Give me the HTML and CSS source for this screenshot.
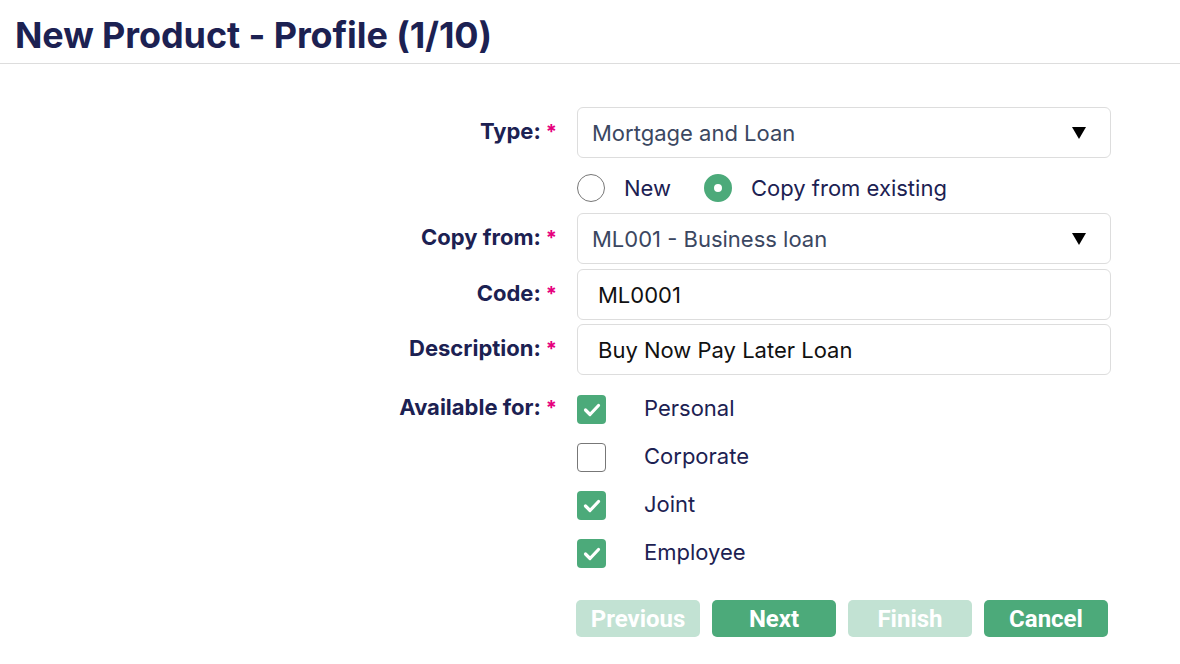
FILE: index.html
```html
<!DOCTYPE html>
<html lang="en">
<head>
    <meta charset="UTF-8">
    <meta name="viewport" content="width=device-width, initial-scale=1.0">
    <title>New Product - Profile</title>
    <link rel="stylesheet" href="styles.css">
</head>
<body>
    <h1 class="page-title">New Product - Profile (1/10)</h1>

    <form class="profile-form">
        <div class="row">
            <label class="label">Type:<span class="req">*</span></label>
            <div class="field select">
                <span class="value">Mortgage and Loan</span>
                <svg class="arrow" width="14" height="12" viewBox="0 0 14 12"><polygon points="0,0 14,0 7,12" fill="#000"/></svg>
            </div>
        </div>

        <div class="row radio-row">
            <div class="label"></div>
            <div class="radios">
                <span class="radio"></span><span class="radio-text">New</span>
                <span class="radio checked"></span><span class="radio-text">Copy from existing</span>
            </div>
        </div>

        <div class="row">
            <label class="label">Copy from:<span class="req">*</span></label>
            <div class="field select">
                <span class="value">ML001 - Business loan</span>
                <svg class="arrow" width="14" height="12" viewBox="0 0 14 12"><polygon points="0,0 14,0 7,12" fill="#000"/></svg>
            </div>
        </div>

        <div class="row row-code">
            <label class="label">Code:<span class="req">*</span></label>
            <div class="field text">ML0001</div>
        </div>

        <div class="row row-desc">
            <label class="label">Description:<span class="req">*</span></label>
            <div class="field text">Buy Now Pay Later Loan</div>
        </div>

        <div class="row row-avail">
            <label class="label">Available for:<span class="req">*</span></label>
            <div class="checks">
                <div class="check-item">
                    <span class="box checked"><svg width="18" height="14" viewBox="0 0 18 14"><polyline points="2.5,7 7,11.5 15.5,2.5" fill="none" stroke="#fff" stroke-width="3.2" stroke-linecap="round" stroke-linejoin="round"/></svg></span>
                    <span class="check-text">Personal</span>
                </div>
                <div class="check-item">
                    <span class="box"></span>
                    <span class="check-text">Corporate</span>
                </div>
                <div class="check-item">
                    <span class="box checked"><svg width="18" height="14" viewBox="0 0 18 14"><polyline points="2.5,7 7,11.5 15.5,2.5" fill="none" stroke="#fff" stroke-width="3.2" stroke-linecap="round" stroke-linejoin="round"/></svg></span>
                    <span class="check-text">Joint</span>
                </div>
                <div class="check-item">
                    <span class="box checked"><svg width="18" height="14" viewBox="0 0 18 14"><polyline points="2.5,7 7,11.5 15.5,2.5" fill="none" stroke="#fff" stroke-width="3.2" stroke-linecap="round" stroke-linejoin="round"/></svg></span>
                    <span class="check-text">Employee</span>
                </div>
            </div>
        </div>

        <div class="row row-buttons">
            <div class="label"></div>
            <div class="buttons">
                <button type="button" class="btn disabled">Previous</button>
                <button type="button" class="btn">Next</button>
                <button type="button" class="btn disabled">Finish</button>
                <button type="button" class="btn">Cancel</button>
            </div>
        </div>
    </form>
</body>
</html>
```

FILE: styles.css
```css
body {
    margin: 0;
    font-family: Inter, "Noto Sans", sans-serif;
    background-color: #fff;
    color: #1c2152;
}
.page-title {
    margin: 0;
    height: 63px;
    padding-left: 15px;
    font-size: 36px;
    font-weight: 700;
    line-height: 70px;
    border-bottom: 1px solid #ddd;
    box-sizing: content-box;
    letter-spacing: -0.1px;
}
.profile-form {
    padding-top: 43px;
}
.row {
    display: flex;
    align-items: center;
}
.label {
    width: 557px;
    flex-shrink: 0;
    text-align: right;
    font-size: 22px;
    font-weight: 700;
    margin-right: 20px;
    padding-bottom: 4px;
}
.req {
    color: #e6007e;
    margin-left: 5px;
    font-size: 20px;
}
.field {
    width: 534px;
    height: 51px;
    box-sizing: border-box;
    border: 1px solid #ddd;
    border-radius: 6px;
    font-size: 22px;
    display: flex;
    align-items: center;
}
.select {
    padding: 0 24px 0 14px;
    justify-content: space-between;
    color: #3b4761;
}
.text {
    padding-left: 20px;
    color: #111;
}
.radio-row {
    height: 55px;
}
.radios {
    display: flex;
    align-items: center;
    font-size: 22px;
    padding-top: 5px;
}
.radio {
    width: 28px;
    height: 28px;
    box-sizing: border-box;
    border: 1px solid #777;
    border-radius: 50%;
    margin-right: 19px;
}
.radio.checked {
    border: 10px solid #4caa7a;
    background-color: #fff;
}
.radio-text {
    margin-right: 33px;
}
.row-code {
    margin-top: 5px;
}
.row-desc {
    margin-top: 4px;
}
.row-avail {
    align-items: flex-start;
    margin-top: 20px;
}
.row-avail .label {
    line-height: 25px;
}
.checks {
    display: flex;
    flex-direction: column;
    gap: 19px;
}
.check-item {
    display: flex;
    align-items: center;
    font-size: 22px;
    height: 29px;
}
.check-text {
    padding-bottom: 4px;
}
.box {
    width: 29px;
    height: 29px;
    box-sizing: border-box;
    border: 1px solid #777;
    border-radius: 4px;
    margin-right: 38px;
    display: flex;
    align-items: center;
    justify-content: center;
}
.box.checked {
    border: none;
    background-color: #4caa7a;
}
.row-buttons {
    margin-top: 32px;
}
.buttons {
    display: flex;
    gap: 12px;
    margin-left: -1px;
}
.btn {
    width: 124px;
    height: 37px;
    border: none;
    border-radius: 5px;
    background-color: #4caa7a;
    color: #fff;
    font-family: Roboto, sans-serif;
    font-weight: 700;
    font-size: 24px;
    padding: 0;
    cursor: pointer;
}
.btn.disabled {
    background-color: #c2e2d3;
}
```
